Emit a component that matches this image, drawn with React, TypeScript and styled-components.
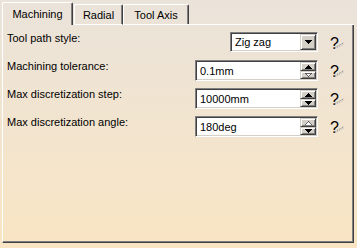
import React from "react";
import styled, { createGlobalStyle } from "styled-components";

const Global = createGlobalStyle`
  html, body { margin: 0; padding: 0; }
  body {
    font-family: "Liberation Sans", Arial, sans-serif;
    font-size: 11px;
    color: #000;
  }
`;

const Dialog = styled.div`
  width: 357px;
  height: 248px;
  box-sizing: border-box;
  padding: 2px 3px 5px 2px;
  display: flex;
  flex-direction: column;
  background: linear-gradient(to bottom, #eae3da 0%, #f1e4d0 45%, #f9e5c3 100%);
`;

const TabStrip = styled.div`
  display: flex;
  align-items: flex-end;
  height: 23px;
  flex: none;
`;

const Tab = styled.div<{ $active?: boolean; $w: number }>`
  box-sizing: border-box;
  width: ${(p) => p.$w}px;
  height: ${(p) => (p.$active ? 23 : 21)}px;
  display: flex;
  align-items: center;
  justify-content: center;
  border-top: 1px solid #fff;
  border-left: 1px solid #fff;
  border-right: 1px solid #404040;
  border-bottom: ${(p) => (p.$active ? "none" : "1px solid #fff")};
  box-shadow: inset -1px 0 0 #808080;
  border-radius: 2px 2px 0 0;
  padding-bottom: ${(p) => (p.$active ? 1 : 0)}px;
  margin-right: ${(p) => (p.$active ? 1 : 0)}px;
  white-space: nowrap;
`;

const TabFiller = styled.div`
  flex: 1;
  border-bottom: 1px solid #fff;
  margin-left: -1px;
`;

const Panel = styled.div`
  flex: 1;
  box-sizing: border-box;
  border-left: 1px solid #fff;
  border-right: 1px solid #404040;
  border-bottom: 1px solid #404040;
  box-shadow: inset -1px -1px 0 #808080;
  padding: 7px 0 0 4px;
`;

const Form = styled.div`
  display: grid;
  grid-template-columns: 1fr auto 35px;
  grid-auto-rows: 21px;
  row-gap: 7px;
`;

const Label = styled.div`
  align-self: start;
  line-height: 13px;
  white-space: nowrap;
`;

const Sunken = styled.div<{ $w: number; $h: number }>`
  justify-self: end;
  align-self: start;
  box-sizing: border-box;
  width: ${(p) => p.$w}px;
  height: ${(p) => p.$h}px;
  display: flex;
  background: #fff;
  border-top: 1px solid #808080;
  border-left: 1px solid #808080;
  border-right: 1px solid #fff;
  border-bottom: 1px solid #fff;
  box-shadow: inset 1px 1px 0 #404040, inset -1px -1px 0 #d4d0c8;
  padding: 1px;
`;

const FieldText = styled.div`
  flex: 1;
  display: flex;
  align-items: center;
  padding-left: 3px;
  white-space: nowrap;
`;

const RaisedButton = styled.div<{ $h?: number }>`
  box-sizing: border-box;
  width: 16px;
  ${(p) => (p.$h ? `height: ${p.$h}px;` : "flex: none;")}
  display: flex;
  align-items: center;
  justify-content: center;
  background: #d4d0c8;
  border-top: 1px solid #d4d0c8;
  border-left: 1px solid #d4d0c8;
  border-right: 1px solid #404040;
  border-bottom: 1px solid #404040;
  box-shadow: inset 1px 1px 0 #fff, inset -1px -1px 0 #808080;
`;

const SpinStack = styled.div`
  width: 16px;
  display: flex;
  flex-direction: column;
`;

const HelpCell = styled.div`
  position: relative;
  padding: 6px 0 0 12px;
  font-size: 16px;
  line-height: 12px;
`;

const HelpTail = styled.svg`
  position: absolute;
  left: 15px;
  top: 10px;
`;

const Arrow = ({ up, disabled }: { up?: boolean; disabled?: boolean }) => (
  <svg width="7" height="4" viewBox="0 0 7 4" shapeRendering="crispEdges">
    <polygon
      points={up ? "0,4 7,4 3.5,0" : "0,0 7,0 3.5,4"}
      fill={disabled ? "#fff" : "#000"}
      stroke={disabled ? "#404040" : "none"}
      strokeWidth={disabled ? 0.8 : 0}
    />
  </svg>
);

const Help = () => (
  <HelpCell>
    ?
    <HelpTail width="12" height="7" viewBox="0 0 12 7">
      <line x1="0.5" y1="6.5" x2="11" y2="0.5" stroke="#8c8c8c" strokeWidth="1" strokeDasharray="1.2 0.8" />
      <line x1="2.5" y1="6.5" x2="11" y2="2" stroke="#b4b4b4" strokeWidth="1" strokeDasharray="1 1" />
    </HelpTail>
  </HelpCell>
);

type Row =
  | { label: string; kind: "select"; value: string }
  | { label: string; kind: "spin"; value: string; upOff?: boolean; downOff?: boolean };

const rows: Row[] = [
  { label: "Tool path style:", kind: "select", value: "Zig zag" },
  { label: "Machining tolerance:", kind: "spin", value: "0.1mm", downOff: true },
  { label: "Max discretization step:", kind: "spin", value: "10000mm" },
  { label: "Max discretization angle:", kind: "spin", value: "180deg", upOff: true },
];

export default function App() {
  return (
    <>
      <Global />
      <Dialog>
        <TabStrip>
          <Tab $active $w={71}>Machining</Tab>
          <Tab $w={49}>Radial</Tab>
          <Tab $w={66}>Tool Axis</Tab>
          <TabFiller />
        </TabStrip>
        <Panel>
          <Form>
            {rows.map((r) => (
              <React.Fragment key={r.label}>
                <Label>{r.label}</Label>
                {r.kind === "select" ? (
                  <Sunken $w={88} $h={20}>
                    <FieldText>{r.value}</FieldText>
                    <RaisedButton>
                      <Arrow />
                    </RaisedButton>
                  </Sunken>
                ) : (
                  <Sunken $w={123} $h={21}>
                    <FieldText>{r.value}</FieldText>
                    <SpinStack>
                      <RaisedButton $h={9}>
                        <Arrow up disabled={r.upOff} />
                      </RaisedButton>
                      <RaisedButton $h={8}>
                        <Arrow disabled={r.downOff} />
                      </RaisedButton>
                    </SpinStack>
                  </Sunken>
                )}
                <Help />
              </React.Fragment>
            ))}
          </Form>
        </Panel>
      </Dialog>
    </>
  );
}
